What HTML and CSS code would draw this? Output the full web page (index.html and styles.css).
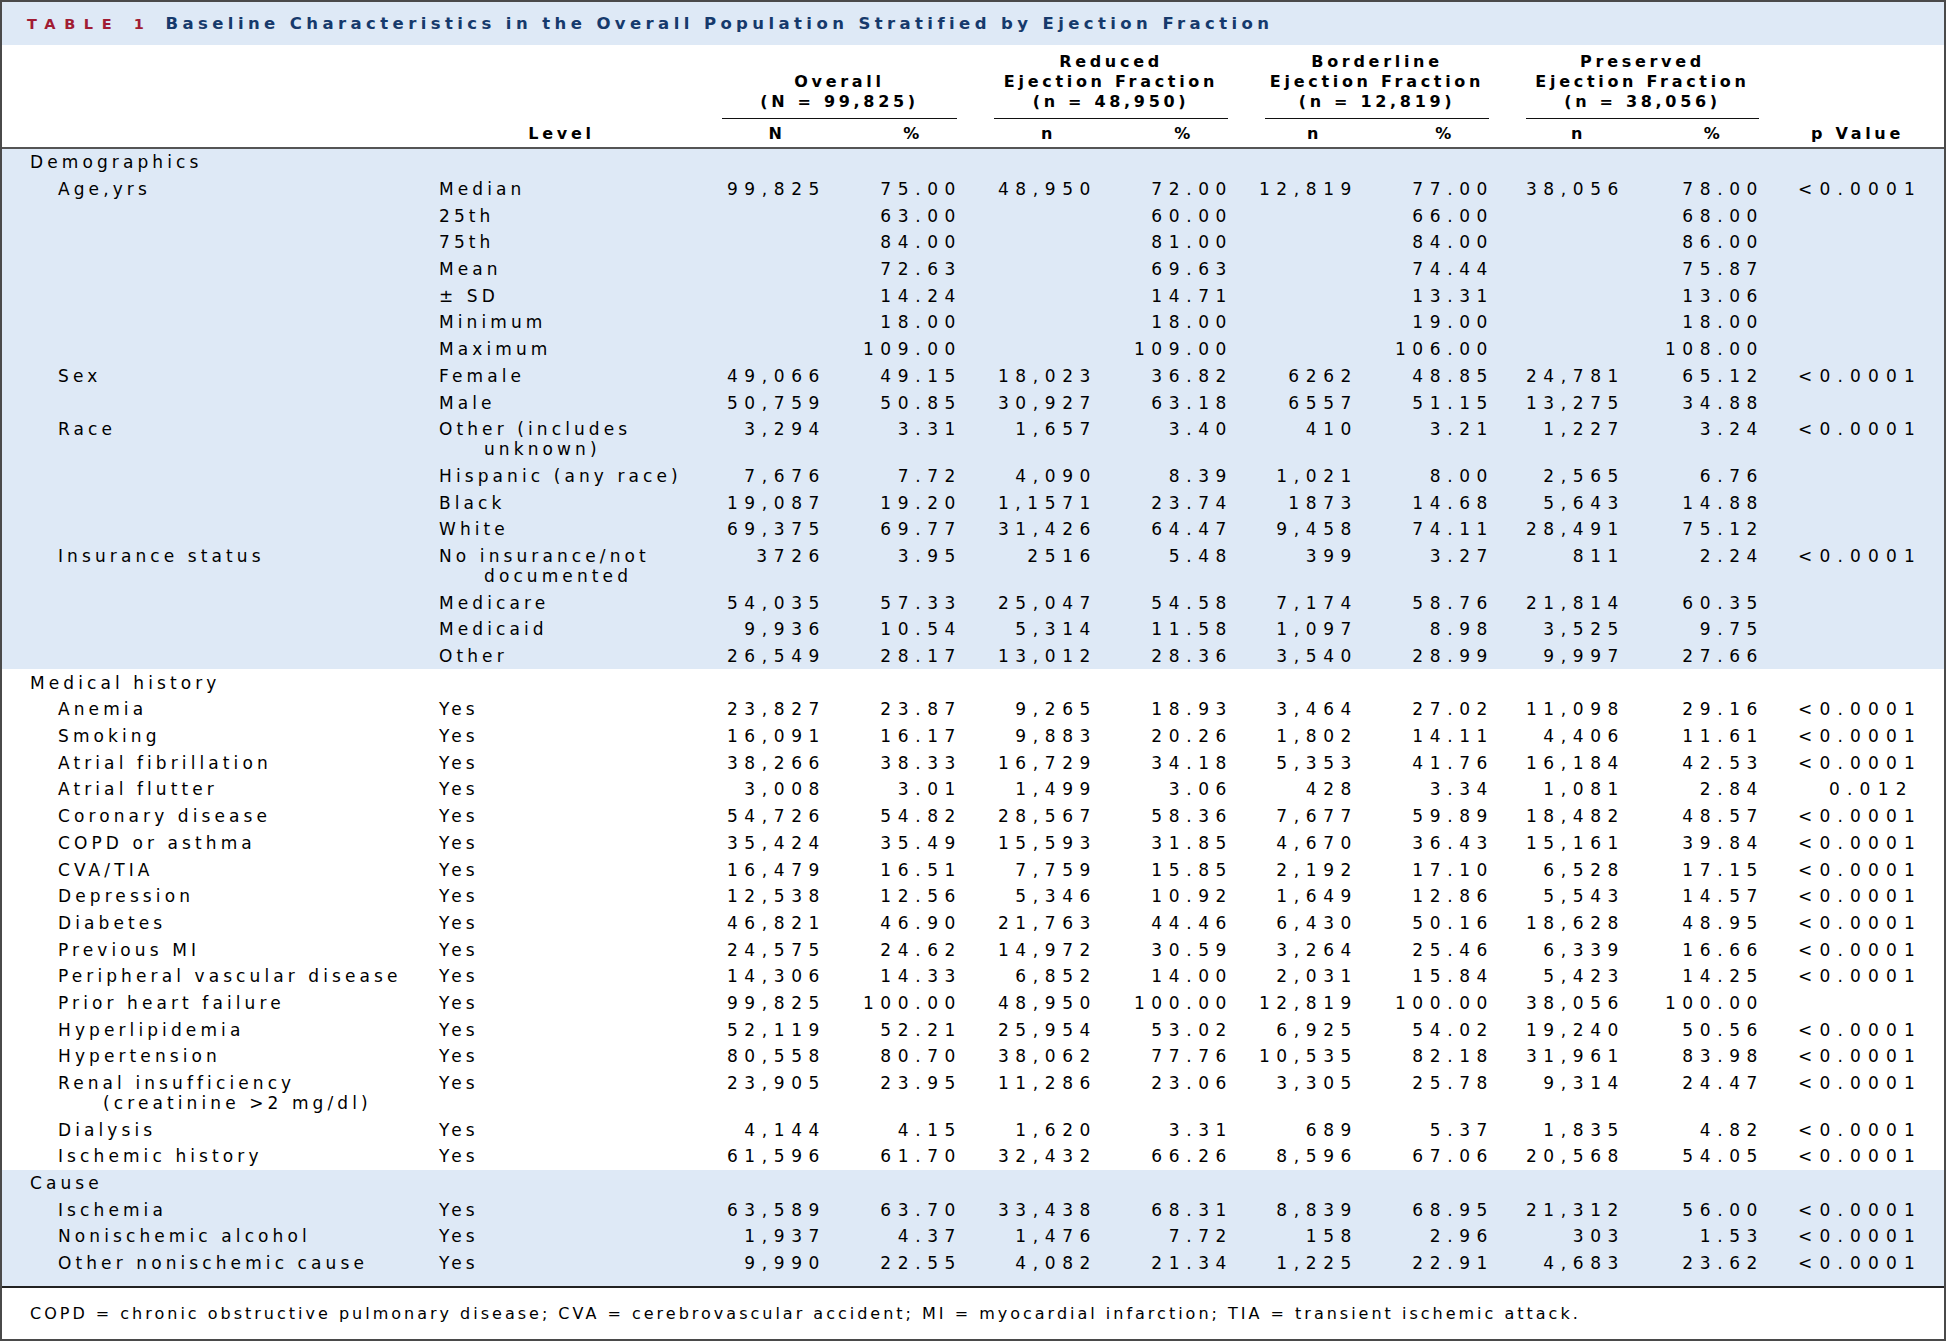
FILE: index.html
```html
<!DOCTYPE html>
<html lang="en">
<head>
<meta charset="utf-8">
<title>Table 1</title>
<link rel="stylesheet" href="styles.css">
</head>
<body>
<div class="page">
  <div class="title-bar"><span class="tag">TABLE 1</span><span class="title">Baseline Characteristics in the Overall Population Stratified by Ejection Fraction</span></div>
  <table class="data">
    <colgroup>
      <col class="c-label"><col class="c-level"><col class="c-a"><col class="c-b"><col class="c-c"><col class="c-d"><col class="c-e"><col class="c-f"><col class="c-g"><col class="c-h"><col class="c-p">
    </colgroup>
    <thead>
      <tr class="groups">
        <th class="blank" rowspan="2"></th>
        <th class="h-level" rowspan="2">Level</th>
        <th class="grp" colspan="2"><div class="grp-in">Overall<br>(N = 99,825)</div></th>
        <th class="grp" colspan="2"><div class="grp-in">Reduced<br>Ejection Fraction<br>(n = 48,950)</div></th>
        <th class="grp" colspan="2"><div class="grp-in">Borderline<br>Ejection Fraction<br>(n = 12,819)</div></th>
        <th class="grp" colspan="2"><div class="grp-in">Preserved<br>Ejection Fraction<br>(n = 38,056)</div></th>
        <th class="h-p" rowspan="2">p Value</th>
      </tr>
      <tr class="subs">
        <th class="sub">N</th><th class="sub">%</th>
        <th class="sub">n</th><th class="sub">%</th>
        <th class="sub">n</th><th class="sub">%</th>
        <th class="sub">n</th><th class="sub">%</th>
      </tr>
    </thead>
    <tbody class="shade">
      <tr><td class="cat" colspan="11">Demographics</td></tr>
      <tr><td class="lbl">Age,yrs</td><td class="lv">Median</td><td class="num">99,825</td><td class="num">75.00</td><td class="num">48,950</td><td class="num">72.00</td><td class="num">12,819</td><td class="num">77.00</td><td class="num">38,056</td><td class="num">78.00</td><td class="p">&lt;0.0001</td></tr>
      <tr><td class="lbl"></td><td class="lv">25th</td><td class="num"></td><td class="num">63.00</td><td class="num"></td><td class="num">60.00</td><td class="num"></td><td class="num">66.00</td><td class="num"></td><td class="num">68.00</td><td class="p"></td></tr>
      <tr><td class="lbl"></td><td class="lv">75th</td><td class="num"></td><td class="num">84.00</td><td class="num"></td><td class="num">81.00</td><td class="num"></td><td class="num">84.00</td><td class="num"></td><td class="num">86.00</td><td class="p"></td></tr>
      <tr><td class="lbl"></td><td class="lv">Mean</td><td class="num"></td><td class="num">72.63</td><td class="num"></td><td class="num">69.63</td><td class="num"></td><td class="num">74.44</td><td class="num"></td><td class="num">75.87</td><td class="p"></td></tr>
      <tr><td class="lbl"></td><td class="lv">± SD</td><td class="num"></td><td class="num">14.24</td><td class="num"></td><td class="num">14.71</td><td class="num"></td><td class="num">13.31</td><td class="num"></td><td class="num">13.06</td><td class="p"></td></tr>
      <tr><td class="lbl"></td><td class="lv">Minimum</td><td class="num"></td><td class="num">18.00</td><td class="num"></td><td class="num">18.00</td><td class="num"></td><td class="num">19.00</td><td class="num"></td><td class="num">18.00</td><td class="p"></td></tr>
      <tr><td class="lbl"></td><td class="lv">Maximum</td><td class="num"></td><td class="num">109.00</td><td class="num"></td><td class="num">109.00</td><td class="num"></td><td class="num">106.00</td><td class="num"></td><td class="num">108.00</td><td class="p"></td></tr>
      <tr><td class="lbl">Sex</td><td class="lv">Female</td><td class="num">49,066</td><td class="num">49.15</td><td class="num">18,023</td><td class="num">36.82</td><td class="num">6262</td><td class="num">48.85</td><td class="num">24,781</td><td class="num">65.12</td><td class="p">&lt;0.0001</td></tr>
      <tr><td class="lbl"></td><td class="lv">Male</td><td class="num">50,759</td><td class="num">50.85</td><td class="num">30,927</td><td class="num">63.18</td><td class="num">6557</td><td class="num">51.15</td><td class="num">13,275</td><td class="num">34.88</td><td class="p"></td></tr>
      <tr><td class="lbl">Race</td><td class="lv"><span class="hang">Other (includes<br>unknown)</span></td><td class="num">3,294</td><td class="num">3.31</td><td class="num">1,657</td><td class="num">3.40</td><td class="num">410</td><td class="num">3.21</td><td class="num">1,227</td><td class="num">3.24</td><td class="p">&lt;0.0001</td></tr>
      <tr><td class="lbl"></td><td class="lv">Hispanic (any race)</td><td class="num">7,676</td><td class="num">7.72</td><td class="num">4,090</td><td class="num">8.39</td><td class="num">1,021</td><td class="num">8.00</td><td class="num">2,565</td><td class="num">6.76</td><td class="p"></td></tr>
      <tr><td class="lbl"></td><td class="lv">Black</td><td class="num">19,087</td><td class="num">19.20</td><td class="num">1,1571</td><td class="num">23.74</td><td class="num">1873</td><td class="num">14.68</td><td class="num">5,643</td><td class="num">14.88</td><td class="p"></td></tr>
      <tr><td class="lbl"></td><td class="lv">White</td><td class="num">69,375</td><td class="num">69.77</td><td class="num">31,426</td><td class="num">64.47</td><td class="num">9,458</td><td class="num">74.11</td><td class="num">28,491</td><td class="num">75.12</td><td class="p"></td></tr>
      <tr><td class="lbl">Insurance status</td><td class="lv"><span class="hang">No insurance/not<br>documented</span></td><td class="num">3726</td><td class="num">3.95</td><td class="num">2516</td><td class="num">5.48</td><td class="num">399</td><td class="num">3.27</td><td class="num">811</td><td class="num">2.24</td><td class="p">&lt;0.0001</td></tr>
      <tr><td class="lbl"></td><td class="lv">Medicare</td><td class="num">54,035</td><td class="num">57.33</td><td class="num">25,047</td><td class="num">54.58</td><td class="num">7,174</td><td class="num">58.76</td><td class="num">21,814</td><td class="num">60.35</td><td class="p"></td></tr>
      <tr><td class="lbl"></td><td class="lv">Medicaid</td><td class="num">9,936</td><td class="num">10.54</td><td class="num">5,314</td><td class="num">11.58</td><td class="num">1,097</td><td class="num">8.98</td><td class="num">3,525</td><td class="num">9.75</td><td class="p"></td></tr>
      <tr><td class="lbl"></td><td class="lv">Other</td><td class="num">26,549</td><td class="num">28.17</td><td class="num">13,012</td><td class="num">28.36</td><td class="num">3,540</td><td class="num">28.99</td><td class="num">9,997</td><td class="num">27.66</td><td class="p"></td></tr>
    </tbody>
    <tbody class="plain">
      <tr><td class="cat" colspan="11">Medical history</td></tr>
      <tr><td class="lbl">Anemia</td><td class="lv">Yes</td><td class="num">23,827</td><td class="num">23.87</td><td class="num">9,265</td><td class="num">18.93</td><td class="num">3,464</td><td class="num">27.02</td><td class="num">11,098</td><td class="num">29.16</td><td class="p">&lt;0.0001</td></tr>
      <tr><td class="lbl">Smoking</td><td class="lv">Yes</td><td class="num">16,091</td><td class="num">16.17</td><td class="num">9,883</td><td class="num">20.26</td><td class="num">1,802</td><td class="num">14.11</td><td class="num">4,406</td><td class="num">11.61</td><td class="p">&lt;0.0001</td></tr>
      <tr><td class="lbl">Atrial fibrillation</td><td class="lv">Yes</td><td class="num">38,266</td><td class="num">38.33</td><td class="num">16,729</td><td class="num">34.18</td><td class="num">5,353</td><td class="num">41.76</td><td class="num">16,184</td><td class="num">42.53</td><td class="p">&lt;0.0001</td></tr>
      <tr><td class="lbl">Atrial flutter</td><td class="lv">Yes</td><td class="num">3,008</td><td class="num">3.01</td><td class="num">1,499</td><td class="num">3.06</td><td class="num">428</td><td class="num">3.34</td><td class="num">1,081</td><td class="num">2.84</td><td class="p p-alt">0.012</td></tr>
      <tr><td class="lbl">Coronary disease</td><td class="lv">Yes</td><td class="num">54,726</td><td class="num">54.82</td><td class="num">28,567</td><td class="num">58.36</td><td class="num">7,677</td><td class="num">59.89</td><td class="num">18,482</td><td class="num">48.57</td><td class="p">&lt;0.0001</td></tr>
      <tr><td class="lbl">COPD or asthma</td><td class="lv">Yes</td><td class="num">35,424</td><td class="num">35.49</td><td class="num">15,593</td><td class="num">31.85</td><td class="num">4,670</td><td class="num">36.43</td><td class="num">15,161</td><td class="num">39.84</td><td class="p">&lt;0.0001</td></tr>
      <tr><td class="lbl">CVA/TIA</td><td class="lv">Yes</td><td class="num">16,479</td><td class="num">16.51</td><td class="num">7,759</td><td class="num">15.85</td><td class="num">2,192</td><td class="num">17.10</td><td class="num">6,528</td><td class="num">17.15</td><td class="p">&lt;0.0001</td></tr>
      <tr><td class="lbl">Depression</td><td class="lv">Yes</td><td class="num">12,538</td><td class="num">12.56</td><td class="num">5,346</td><td class="num">10.92</td><td class="num">1,649</td><td class="num">12.86</td><td class="num">5,543</td><td class="num">14.57</td><td class="p">&lt;0.0001</td></tr>
      <tr><td class="lbl">Diabetes</td><td class="lv">Yes</td><td class="num">46,821</td><td class="num">46.90</td><td class="num">21,763</td><td class="num">44.46</td><td class="num">6,430</td><td class="num">50.16</td><td class="num">18,628</td><td class="num">48.95</td><td class="p">&lt;0.0001</td></tr>
      <tr><td class="lbl">Previous MI</td><td class="lv">Yes</td><td class="num">24,575</td><td class="num">24.62</td><td class="num">14,972</td><td class="num">30.59</td><td class="num">3,264</td><td class="num">25.46</td><td class="num">6,339</td><td class="num">16.66</td><td class="p">&lt;0.0001</td></tr>
      <tr><td class="lbl">Peripheral vascular disease</td><td class="lv">Yes</td><td class="num">14,306</td><td class="num">14.33</td><td class="num">6,852</td><td class="num">14.00</td><td class="num">2,031</td><td class="num">15.84</td><td class="num">5,423</td><td class="num">14.25</td><td class="p">&lt;0.0001</td></tr>
      <tr><td class="lbl">Prior heart failure</td><td class="lv">Yes</td><td class="num">99,825</td><td class="num">100.00</td><td class="num">48,950</td><td class="num">100.00</td><td class="num">12,819</td><td class="num">100.00</td><td class="num">38,056</td><td class="num">100.00</td><td class="p"></td></tr>
      <tr><td class="lbl">Hyperlipidemia</td><td class="lv">Yes</td><td class="num">52,119</td><td class="num">52.21</td><td class="num">25,954</td><td class="num">53.02</td><td class="num">6,925</td><td class="num">54.02</td><td class="num">19,240</td><td class="num">50.56</td><td class="p">&lt;0.0001</td></tr>
      <tr><td class="lbl">Hypertension</td><td class="lv">Yes</td><td class="num">80,558</td><td class="num">80.70</td><td class="num">38,062</td><td class="num">77.76</td><td class="num">10,535</td><td class="num">82.18</td><td class="num">31,961</td><td class="num">83.98</td><td class="p">&lt;0.0001</td></tr>
      <tr><td class="lbl"><span class="hang">Renal insufficiency<br>(creatinine &gt;2 mg/dl)</span></td><td class="lv">Yes</td><td class="num">23,905</td><td class="num">23.95</td><td class="num">11,286</td><td class="num">23.06</td><td class="num">3,305</td><td class="num">25.78</td><td class="num">9,314</td><td class="num">24.47</td><td class="p">&lt;0.0001</td></tr>
      <tr><td class="lbl">Dialysis</td><td class="lv">Yes</td><td class="num">4,144</td><td class="num">4.15</td><td class="num">1,620</td><td class="num">3.31</td><td class="num">689</td><td class="num">5.37</td><td class="num">1,835</td><td class="num">4.82</td><td class="p">&lt;0.0001</td></tr>
      <tr><td class="lbl">Ischemic history</td><td class="lv">Yes</td><td class="num">61,596</td><td class="num">61.70</td><td class="num">32,432</td><td class="num">66.26</td><td class="num">8,596</td><td class="num">67.06</td><td class="num">20,568</td><td class="num">54.05</td><td class="p">&lt;0.0001</td></tr>
    </tbody>
    <tbody class="shade last">
      <tr><td class="cat" colspan="11">Cause</td></tr>
      <tr><td class="lbl">Ischemia</td><td class="lv">Yes</td><td class="num">63,589</td><td class="num">63.70</td><td class="num">33,438</td><td class="num">68.31</td><td class="num">8,839</td><td class="num">68.95</td><td class="num">21,312</td><td class="num">56.00</td><td class="p">&lt;0.0001</td></tr>
      <tr><td class="lbl">Nonischemic alcohol</td><td class="lv">Yes</td><td class="num">1,937</td><td class="num">4.37</td><td class="num">1,476</td><td class="num">7.72</td><td class="num">158</td><td class="num">2.96</td><td class="num">303</td><td class="num">1.53</td><td class="p">&lt;0.0001</td></tr>
      <tr class="end"><td class="lbl">Other nonischemic cause</td><td class="lv">Yes</td><td class="num">9,990</td><td class="num">22.55</td><td class="num">4,082</td><td class="num">21.34</td><td class="num">1,225</td><td class="num">22.91</td><td class="num">4,683</td><td class="num">23.62</td><td class="p">&lt;0.0001</td></tr>
    </tbody>
  </table>
  <div class="foot">COPD = chronic obstructive pulmonary disease; CVA = cerebrovascular accident; MI = myocardial infarction; TIA = transient ischemic attack.</div>
</div>
</body>
</html>
```

FILE: styles.css
```css
html, body {
  margin: 0;
  padding: 0;
  background: #ffffff;
}

.page {
  width: 1946px;
  height: 1341px;
  box-sizing: border-box;
  border: 2px solid #4a4a4a;
  display: flex;
  flex-direction: column;
  font-family: "DejaVu Sans", "Liberation Sans", sans-serif;
  color: #000000;
  overflow: hidden;
}

.title-bar {
  height: 43px;
  flex: none;
  background: #dee9f6;
  display: flex;
  align-items: center;
  padding-left: 25px;
}

.tag {
  font-weight: bold;
  font-size: 14.5px;
  letter-spacing: 8.6px;
  color: #a11c33;
  margin-right: 13px;
}

.title {
  font-weight: bold;
  font-size: 16.5px;
  letter-spacing: 4.4px;
  color: #163a6c;
}

.data {
  width: 1942px;
  flex: none;
  table-layout: fixed;
  border-collapse: separate;
  border-spacing: 0;
  font-size: 17px;
  line-height: 20px;
}

.c-label { width: 437px; }
.c-level { width: 264px; }
.c-a { width: 136px; }
.c-b { width: 136px; }
.c-c { width: 135px; }
.c-d { width: 136px; }
.c-e { width: 125px; }
.c-f { width: 136px; }
.c-g { width: 131px; }
.c-h { width: 139px; }
.c-p { width: 167px; }

th {
  font-weight: bold;
  font-size: 16px;
  letter-spacing: 3.7px;
  color: #000000;
}

.groups th {
  vertical-align: bottom;
}

.grp {
  padding: 7px 18px 0 19px;
  text-align: center;
}

.grp-in {
  padding-bottom: 6px;
  border-bottom: 1px solid #111111;
}

.sub {
  text-align: center;
  padding: 5px 18px 3px 30px;
  border-bottom: 2px solid #555555;
}

.blank,
.h-level,
.h-p {
  border-bottom: 2px solid #555555;
  padding: 0 0 3px 0;
}

.h-level {
  text-align: center;
  padding-right: 19px;
}

.h-p {
  text-align: center;
  padding-left: 21px;
  padding-right: 27px;
}

td {
  padding: 3.35px 0;
  vertical-align: top;
  letter-spacing: 4.1px;
  white-space: nowrap;
}

.shade td {
  background: #dee9f6;
}

.cat {
  padding-left: 28px;
}

.lbl {
  padding-left: 56px;
}

.lv {
  padding-left: 0;
}

.hang {
  display: block;
  padding-left: 45px;
  text-indent: -45px;
}

.num {
  text-align: right;
  padding-right: 13px;
  letter-spacing: 6.6px;
}

.p {
  padding-left: 21px;
  letter-spacing: 7.2px;
}

.p-alt {
  padding-left: 52px;
}

.end td {
  padding-bottom: 13px;
}

.foot {
  flex: 1;
  border-top: 2px solid #222222;
  display: flex;
  align-items: center;
  padding-left: 28px;
  font-size: 16px;
  letter-spacing: 3px;
  white-space: nowrap;
}
```
